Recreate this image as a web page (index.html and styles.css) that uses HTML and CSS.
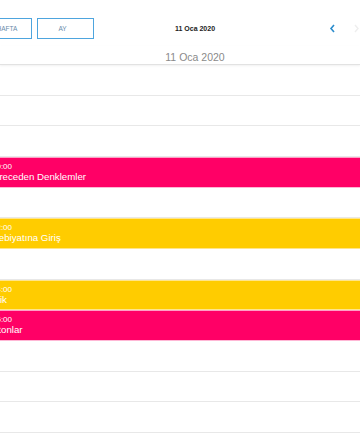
FILE: index.html
```html
<!DOCTYPE html>
<html>
 <head>
  <meta charset="utf-8">
  <link rel="stylesheet" href="styles.css">
 </head>
 <body>
 <div class="cal">
  <div class="toolbar">
   <div class="views">
    <span class="view view-week">HAFTA</span>
    <span class="view view-month">AY</span>
   </div>
   <div class="title">11 Oca 2020</div>
   <div class="nav">
    <span class="nav-prev">
     <svg width="7" height="9" viewBox="0 0 7 9"><path d="M5 1 L2 4.5 L5 8" fill="none" stroke="#2b8ccc" stroke-width="1.6"/></svg>
    </span>
    <span class="nav-next">
     <svg width="7" height="9" viewBox="0 0 7 9"><path d="M2 1 L5 4.5 L2 8" fill="none" stroke="#eeeeee" stroke-width="1.4"/></svg>
    </span>
   </div>
  </div>
  <div class="day-head">11 Oca 2020</div>
  <div class="slots">
   <div class="slot"></div>
   <div class="slot"></div>
   <div class="slot"></div>
   <div class="slot event pink"><span class="ev-time">10:00</span><span class="ev-title">Dereceden Denklemler</span></div>
   <div class="slot"></div>
   <div class="slot event yellow"><span class="ev-time">12:00</span><span class="ev-title">Edebiyatına Giriş</span></div>
   <div class="slot"></div>
   <div class="slot event yellow"><span class="ev-time">14:00</span><span class="ev-title">Fizik</span></div>
   <div class="slot event pink"><span class="ev-time">15:00</span><span class="ev-title">Fotonlar</span></div>
   <div class="slot"></div>
   <div class="slot"></div>
   <div class="slot"></div>
  </div>
 </div>
 </body>
</html>
```
FILE: styles.css
```css
* { margin: 0; padding: 0; box-sizing: border-box; }
body { width: 360px; height: 443px; overflow: hidden; background: #fff; font-family: "Liberation Sans", Arial, Helvetica, sans-serif; }
.cal { width: 360px; }

.toolbar { display: flex; align-items: center; height: 46px; padding-top: 11px; }
.views { display: flex; gap: 5px; margin-left: -18px; }
.view { display: flex; align-items: center; justify-content: center; height: 21px; border: 1px solid #4ea5de; color: #6a8bab; font-size: 6.5px; }
.view-week { width: 50px; }
.view-month { width: 57px; padding-right: 6px; }
.title { width: 202px; text-align: center; font-size: 7px; font-weight: bold; color: #222; }
.nav { display: flex; gap: 17px; margin-left: 33px; }
.nav span { display: flex; }

.day-head { height: 19px; padding: 2px 0 0 30px; text-align: center; color: #8a8a8a; font-size: 10.5px; line-height: 18px; border-bottom: 1px solid #e2e2e2; box-shadow: 0 1px 2px rgba(0,0,0,0.06); }

.slots { margin-left: -14px; }
.slot { height: 30.67px; border-bottom: 1px solid #e8e8e8; }
.event { display: flex; flex-direction: column; padding: 4px 3px; color: #fff; }
.pink { background: #ff0066; border-top: 1px solid #ff9fc6; border-bottom: 1px solid #ffb7d5; }
.yellow { background: #ffcc00; border-top: 1px solid #ffe58a; border-bottom: 1px solid #ffe58a; }
.ev-time { padding-left: 3px; font-size: 8px; line-height: 9px; }
.ev-title { margin-left: -2px; font-size: 9.7px; line-height: 12px; }
```
